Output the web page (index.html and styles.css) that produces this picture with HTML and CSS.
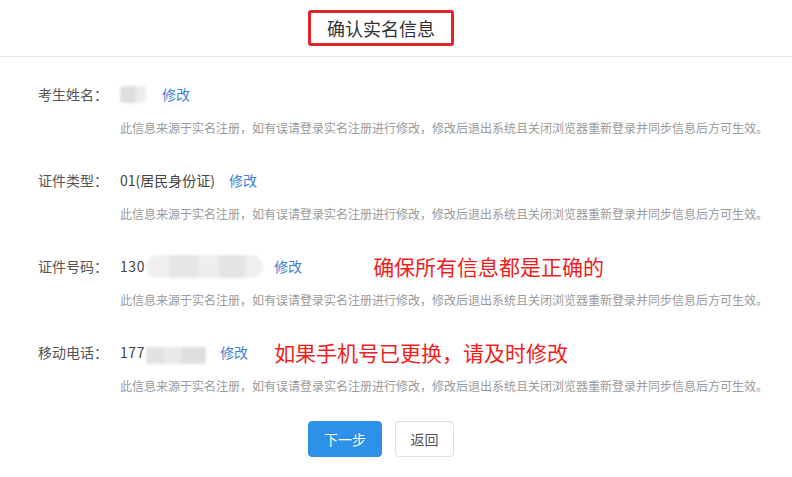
FILE: index.html
```html
<!DOCTYPE html>
<html lang="zh-CN">
<head>
<meta charset="utf-8">
<title>确认实名信息</title>
<link rel="stylesheet" href="styles.css">
</head>
<body>
<div class="page">
  <header class="header">
    <h1 class="title">确认实名信息</h1>
  </header>
  <main class="content">
    <section class="row">
      <div class="line">
        <span class="label">考生姓名：</span>
        <span class="mask mask-name"></span>
        <a class="edit gap-16">修改</a>
      </div>
      <p class="note">此信息来源于实名注册，如有误请登录实名注册进行修改，修改后退出系统且关闭浏览器重新登录并同步信息后方可生效。</p>
    </section>
    <section class="row">
      <div class="line">
        <span class="label">证件类型：</span>
        <span class="value">01(居民身份证)</span>
        <a class="edit gap-14">修改</a>
      </div>
      <p class="note">此信息来源于实名注册，如有误请登录实名注册进行修改，修改后退出系统且关闭浏览器重新登录并同步信息后方可生效。</p>
    </section>
    <section class="row">
      <div class="line">
        <span class="label">证件号码：</span>
        <span class="value num">130</span>
        <span class="mask mask-id"></span>
        <a class="edit gap-11">修改</a>
        <span class="annot annot-1">确保所有信息都是正确的</span>
      </div>
      <p class="note">此信息来源于实名注册，如有误请登录实名注册进行修改，修改后退出系统且关闭浏览器重新登录并同步信息后方可生效。</p>
    </section>
    <section class="row">
      <div class="line">
        <span class="label">移动电话：</span>
        <span class="value num">177</span>
        <span class="mask mask-phone"></span>
        <a class="edit gap-14">修改</a>
        <span class="annot annot-2">如果手机号已更换，请及时修改</span>
      </div>
      <p class="note">此信息来源于实名注册，如有误请登录实名注册进行修改，修改后退出系统且关闭浏览器重新登录并同步信息后方可生效。</p>
    </section>
    <div class="actions">
      <button class="btn btn-primary">下一步</button>
      <button class="btn btn-default">返回</button>
    </div>
  </main>
</div>
</body>
</html>
```

FILE: styles.css
```css
* { box-sizing: border-box; }
html, body {
  margin: 0;
  padding: 0;
  background: #fff;
}
body {
  font-family: "Noto Sans CJK SC", "Microsoft YaHei", sans-serif;
  color: #333;
  width: 792px;
  height: 477px;
  overflow: hidden;
}
.page { width: 792px; }
.header {
  height: 57px;
  border-bottom: 1px solid #e8e8e8;
  display: flex;
  justify-content: center;
  align-items: flex-start;
  padding-top: 10px;
  padding-right: 30px;
}
.title {
  margin: 0;
  width: 146px;
  height: 36px;
  border: 3px solid #e4262a;
  border-radius: 3px;
  font-size: 18px;
  font-weight: normal;
  color: #333;
  display: flex;
  align-items: center;
  justify-content: center;
  line-height: 1;
}
.content {
  padding: 27px 0 0 38px;
}
.row {
  margin-bottom: 32px;
}
.line {
  display: flex;
  align-items: center;
  height: 20px;
  font-size: 14px;
}
.label {
  width: 82px;
  color: #555;
  flex: none;
}
.value { color: #444; }
.num { letter-spacing: 0.6px; }
.edit {
  color: #3d82d6;
  cursor: pointer;
}
.gap-16 { margin-left: 16px; }
.gap-14 { margin-left: 14px; }
.gap-11 { margin-left: 11px; }
.mask {
  display: inline-block;
  background: #e6e6e6;
  filter: blur(1.5px);
}
.mask-name {
  width: 26px;
  height: 17px;
  border-radius: 4px;
  background: linear-gradient(90deg, #dedede 0 60%, #ececec 60% 100%);
}
.mask-id {
  width: 117px;
  height: 23px;
  margin-left: 1px;
  border-radius: 12px;
  background: linear-gradient(90deg, #efefef 0 20%, #e6e6e6 20% 45%, #eeeeee 45% 62%, #e4e4e4 62% 85%, #efefef 85% 100%);
}
.mask-phone {
  width: 60px;
  height: 17px;
  margin-left: 1px;
  margin-top: 6px;
  border-radius: 2px;
  background: linear-gradient(90deg, #e2e2e2 0 30%, #e9e9e9 30% 60%, #dedede 60% 100%);
}
.annot {
  color: #f01e1e;
  font-size: 21px;
  line-height: 1;
  white-space: nowrap;
}
.annot-1 { margin-left: 71px; }
.annot-2 { margin-left: 26px; }
.note {
  margin: 14px 0 0 82px;
  height: 20px;
  line-height: 20px;
  font-size: 12px;
  color: #9a9a9a;
  white-space: nowrap;
}
.actions {
  display: flex;
  justify-content: center;
  gap: 13px;
  margin-top: -7px;
  margin-left: -38px;
  padding-right: 30px;
}
.btn {
  height: 36px;
  border-radius: 4px;
  font-family: inherit;
  font-size: 14px;
  padding: 0;
  cursor: pointer;
}
.btn-primary {
  width: 74px;
  background: #2d90e9;
  border: 1px solid #2d90e9;
  color: #fff;
}
.btn-default {
  width: 59px;
  background: #fff;
  border: 1px solid #dcdfe6;
  color: #555;
}
```
